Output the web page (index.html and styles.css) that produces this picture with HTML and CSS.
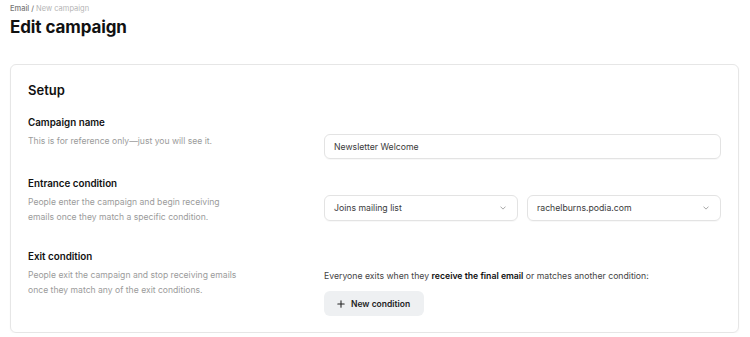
FILE: index.html
```html
<!DOCTYPE html>
<html lang="en">
<head>
    <meta charset="UTF-8">
    <meta name="viewport" content="width=device-width, initial-scale=1.0">
    <title>Edit campaign</title>
    <link rel="stylesheet" href="styles.css">
</head>
<body>
    <div class="page">
        <div class="breadcrumb"><span class="crumb-parent">Email /</span> New campaign</div>
        <h1>Edit campaign</h1>

        <div class="card">
            <h2>Setup</h2>

            <div class="field">
                <div class="field-label">Campaign name</div>
                <div class="field-row">
                    <div class="field-desc">This is for reference only—just you will see it.</div>
                    <div class="field-control">
                        <div class="input">Newsletter Welcome</div>
                    </div>
                </div>
            </div>

            <div class="field">
                <div class="field-label">Entrance condition</div>
                <div class="field-row">
                    <div class="field-desc">People enter the campaign and begin receiving<br>emails once they match a specific condition.</div>
                    <div class="field-control selects">
                        <div class="input select">
                            <span>Joins mailing list</span>
                            <svg class="chevron" viewBox="0 0 8 5" width="6" height="4"><path d="M1 1l3 3 3-3" fill="none" stroke="#8a8a8a" stroke-width="1" stroke-linecap="round" stroke-linejoin="round"/></svg>
                        </div>
                        <div class="input select">
                            <span>rachelburns.podia.com</span>
                            <svg class="chevron" viewBox="0 0 8 5" width="6" height="4"><path d="M1 1l3 3 3-3" fill="none" stroke="#8a8a8a" stroke-width="1" stroke-linecap="round" stroke-linejoin="round"/></svg>
                        </div>
                    </div>
                </div>
            </div>

            <div class="field field-exit">
                <div class="field-label">Exit condition</div>
                <div class="field-row">
                    <div class="field-desc">People exit the campaign and stop receiving emails<br>once they match any of the exit conditions.</div>
                    <div class="field-control">
                        <div class="exit-text">Everyone exits when they <strong>receive the final email</strong> or matches another condition:</div>
                        <button class="btn">
                            <svg viewBox="0 0 10 10" width="8" height="8"><path d="M5 1v8M1 5h8" stroke="#222" stroke-width="1.3" stroke-linecap="round"/></svg>
                            New condition
                        </button>
                    </div>
                </div>
            </div>
        </div>
    </div>
</body>
</html>
```

FILE: styles.css
```css
body {
    font-family: Inter, 'Noto Sans', sans-serif;
    background: #fff;
    color: #111;
    margin: 0;
}

.page {
    padding: 4px 11px 0 10px;
}

.breadcrumb {
    font-size: 7.5px;
    line-height: 9px;
    color: #b5b5b5;
}

.crumb-parent {
    color: #777;
    font-weight: 500;
}

h1 {
    font-size: 17px;
    font-weight: 700;
    margin: 2px 0 0;
    line-height: 24px;
    letter-spacing: -0.1px;
}

.card {
    margin-top: 25px;
    border: 1px solid #e6e6e6;
    border-radius: 6px;
    padding: 17px 17px 16px 17px;
    box-shadow: 0 1px 2px rgba(0, 0, 0, 0.04);
}

h2 {
    font-size: 13px;
    font-weight: 600;
    margin: 0;
    line-height: 16px;
}

.field {
    margin-top: 18px;
}

.field-exit {
    margin-top: 25px;
}

.field-label {
    font-size: 9.8px;
    font-weight: 600;
    line-height: 14px;
    margin-bottom: 4px;
}

.field-row {
    display: grid;
    grid-template-columns: 296px 1fr;
}

.field-desc {
    font-size: 8.6px;
    line-height: 15px;
    color: #9b9b9b;
}

.field-control {
    min-width: 0;
}

.input {
    height: 23px;
    border: 1px solid #e3e3e3;
    border-radius: 6px;
    padding: 0 9px;
    display: flex;
    align-items: center;
    font-size: 8.7px;
    color: #3a3a3a;
    box-shadow: 0 1px 1px rgba(0, 0, 0, 0.03);
}

.selects {
    display: grid;
    grid-template-columns: 1fr 1fr;
    gap: 9px;
}

.select {
    justify-content: space-between;
    height: 24px;
}

.chevron {
    margin-right: 2px;
}

.exit-text {
    font-size: 8.7px;
    line-height: 15px;
    color: #444;
    margin-top: 1px;
}

.exit-text strong {
    color: #111;
    font-weight: 600;
}

.btn {
    margin-top: 7px;
    display: inline-flex;
    align-items: center;
    gap: 6px;
    height: 25px;
    padding: 0 14px 0 13px;
    border: none;
    border-radius: 6px;
    background: #eef0f2;
    font-family: inherit;
    font-size: 8.5px;
    font-weight: 600;
    color: #222;
}
```
